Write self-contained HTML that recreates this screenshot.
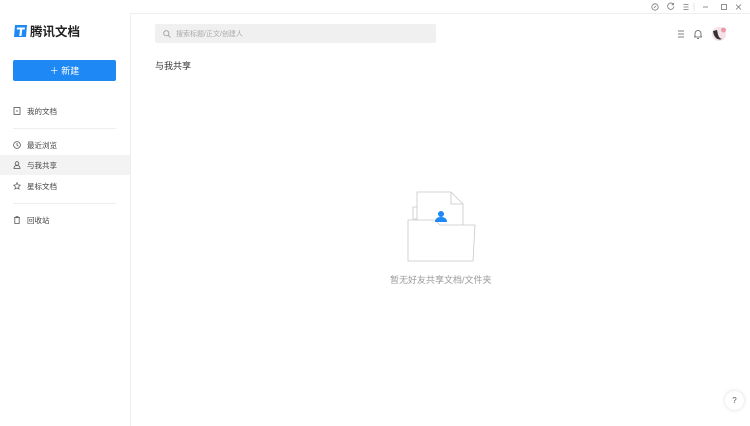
<!DOCTYPE html>
<html><head><meta charset="utf-8"><style>
*{margin:0;padding:0;box-sizing:border-box}
body{width:750px;height:426px;overflow:hidden;background:#fff;font-family:"Liberation Sans","Noto Sans CJK SC",sans-serif;position:relative;color:#333}
.abs{position:absolute}
.main{left:130px;top:13px;width:620px;height:413px;border-left:1px solid #eee;border-top:1px solid #eee}
.logo{left:13px;top:21px;font-size:12.5px;font-weight:bold;color:#222;display:flex;align-items:center;gap:2px}
.btn{left:13px;top:60px;width:103px;height:21px;background:#1e88f5;color:#fff;font-size:9px;display:flex;align-items:center;justify-content:center;border-radius:2px}
.item{left:0;width:130px;height:20px;font-size:7.5px;color:#444;display:flex;align-items:center;padding-left:13px;gap:6px}
.item svg{width:8px;height:8px}
.hr{left:13px;width:103px;height:1px;background:#eee}
.search{left:155px;top:24px;width:281px;height:19px;background:#f0f0f0;border-radius:2px;font-size:7px;color:#aaa;display:flex;align-items:center;padding-left:8px;gap:5px}
</style></head><body>
<div class="abs main"></div>
<div class="abs logo"><svg width="15" height="14" viewBox="0 0 15 14"><path d="M2 1h12l-1 12H1z" fill="#1e88f5"/><path d="M4 3.5h8l-.3 2H9.2L8.5 12H6.3L7 5.5H3.7z" fill="#fff"/></svg>腾讯文档</div>
<div class="abs btn">＋ 新建</div>
<div class="abs item" style="top:101px"><svg viewBox="0 0 8 8"><rect x="1" y=".5" width="6" height="7" fill="none" stroke="#555" stroke-width=".8"/><path d="M3 4h2" stroke="#555" stroke-width=".8"/></svg>我的文档</div>
<div class="abs hr" style="top:128px"></div>
<div class="abs item" style="top:135px"><svg viewBox="0 0 8 8"><circle cx="4" cy="4" r="3.4" fill="none" stroke="#555" stroke-width=".8"/><path d="M4 2v2.2l1.3 1" fill="none" stroke="#555" stroke-width=".8"/></svg>最近浏览</div>
<div class="abs item" style="top:155px;background:#f3f3f3"><svg viewBox="0 0 8 8"><circle cx="4" cy="2.5" r="1.8" fill="none" stroke="#555" stroke-width=".8"/><path d="M1 7.5c0-2 1.3-3 3-3s3 1 3 3z" fill="none" stroke="#555" stroke-width=".8"/></svg>与我共享</div>
<div class="abs item" style="top:176px"><svg viewBox="0 0 8 8"><path d="M4 .6l1 2.2 2.4.3-1.8 1.6.5 2.4L4 5.9 1.9 7.1l.5-2.4L.6 3.1 3 2.8z" fill="none" stroke="#555" stroke-width=".7"/></svg>星标文档</div>
<div class="abs hr" style="top:203px"></div>
<div class="abs item" style="top:210px"><svg viewBox="0 0 8 8"><path d="M1 1.5h6M3 1.5V.7h2v.8M1.8 1.5v6h4.4v-6" fill="none" stroke="#555" stroke-width=".8"/></svg>回收站</div>
<div class="abs search"><svg width="8" height="8" viewBox="0 0 8 8"><circle cx="3.3" cy="3.3" r="2.6" fill="none" stroke="#999" stroke-width=".8"/><path d="M5.2 5.2L7.5 7.5" stroke="#999" stroke-width=".8"/></svg>搜索标题/正文/创建人</div>
<div class="abs" style="left:155px;top:59px;font-size:9px;color:#333">与我共享</div>
<svg class="abs" style="left:648px;top:2px" width="100" height="10" viewBox="0 0 100 10">
<g fill="none" stroke="#777" stroke-width=".8"><circle cx="7" cy="5" r="3.2"/><path d="M6 6l2-2"/><path d="M25.5 2.4A3.2 3.2 0 1 0 26 4.5"/><path d="M25.5 1v1.8h-1.8"/><path d="M35.5 2.5h5M35.5 5h5M35.5 7.5h5"/><path d="M46 1v8" stroke="#ddd"/><path d="M55 5h5"/><rect x="73.5" y="2.5" width="5" height="5"/><path d="M88 2.5l5 5M93 2.5l-5 5"/></g></svg>
<svg class="abs" style="left:676px;top:26px" width="56" height="16" viewBox="0 0 56 16">
<g fill="none" stroke="#555" stroke-width=".8"><path d="M2 5h6M2 8h6M2 11h6"/><path d="M19 11V7.5a3 3 0 0 1 6 0V11zM18 11h8M21 12.5h2"/></g>
<circle cx="43" cy="8" r="7" fill="#f5e1e6"/><path d="M37 5c1 8 6 9.5 9 8-4-1-4-5-5-9z" fill="#333"/><circle cx="47.5" cy="4" r="2.5" fill="#e89aa9"/></svg>
<svg class="abs" style="left:405px;top:190px" width="74" height="72" viewBox="0 0 74 72">
<g fill="#fff" stroke="#c8c8c8" stroke-width=".8">
<path d="M8 17h6v12H8z"/>
<path d="M12 2h34l12 12v50H12z"/><path d="M46 2v12h12" fill="none"/>
<path d="M3 30h27l5 5h35l-2 36H3z"/>
</g>
<circle cx="36" cy="24" r="3" fill="#1e88f5"/><path d="M30 32c0-3.5 2.5-5 6-5s6 1.5 6 5z" fill="#1e88f5"/>
</svg>
<div class="abs" style="left:390px;top:273px;font-size:9px;color:#999">暂无好友共享文档/文件夹</div>
<div class="abs" style="left:725px;top:391px;width:19px;height:19px;border-radius:50%;background:#fff;box-shadow:0 0 4px rgba(0,0,0,.15);font-size:8px;color:#555;display:flex;align-items:center;justify-content:center">?</div>
</body></html>
